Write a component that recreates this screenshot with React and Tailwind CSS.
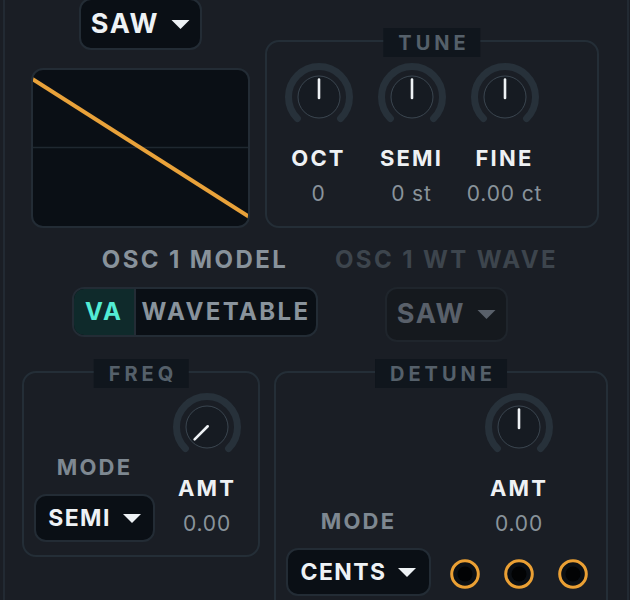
import React from 'react';

const Caret = ({ className }) => (
  <svg viewBox="0 0 20 10" className={className}>
    <path d="M0 0 L20 0 L10 10 Z" fill="currentColor" />
  </svg>
);

const Dropdown = ({ label, className, textClass, caretClass }) => (
  <div className={`flex items-center justify-center gap-[12px] rounded-[12px] border-2 ${className}`}>
    <span className={`font-bold tracking-[0.06em] ${textClass}`}>{label}</span>
    <Caret className={caretClass} />
  </div>
);

// 270 degree dial, pointer angle in degrees clockwise from top
const Knob = ({ angle = 0 }) => (
  <svg width="70" height="70" viewBox="0 0 70 70">
    <path d="M13.43 56.57 A30.5 30.5 0 1 1 56.57 56.57" fill="none" stroke="#27313a" strokeWidth="7" strokeLinecap="round" />
    <circle cx="35" cy="35" r="21" fill="#161b22" stroke="#3b4650" strokeWidth="1" />
    <g transform={`rotate(${angle} 35 35)`}>
      <line x1="35" y1="36" x2="35" y2="17.5" stroke="#eef2f5" strokeWidth="2.6" strokeLinecap="round" />
    </g>
  </svg>
);

const Jack = () => (
  <svg width="30" height="30" viewBox="0 0 30 30">
    <circle cx="15" cy="15" r="13.3" fill="#0b0f14" stroke="#eba034" strokeWidth="3" />
    <circle cx="15" cy="15" r="7.5" fill="#020304" />
  </svg>
);

const Panel = ({ title, className, children }) => (
  <div className={`relative rounded-[14px] border-2 border-[#242e37] ${className}`}>
    <div className="absolute left-1/2 top-[-14px] flex h-[29px] -translate-x-1/2 items-center bg-[#10161d] pl-[15px] pr-[11px] text-[20px] font-bold tracking-[0.2em] text-[#55606a]">
      {title}
    </div>
    {children}
  </div>
);

const KnobColumn = ({ label, value, angle, className }) => (
  <div className={`flex flex-col items-center ${className}`}>
    <Knob angle={angle} />
    <div className="mt-[14px] text-[22px] font-bold leading-[24px] tracking-[0.1em] text-[#eef1f4]">{label}</div>
    <div className="mt-[12px] text-[21px] leading-[24px] tracking-[0.04em] text-[#89939b]">{value}</div>
  </div>
);

export default function App() {
  return (
    <div className="h-[600px] w-[630px] overflow-hidden bg-[#1a1e25] pl-[3px] font-['Inter',sans-serif]">
      <div className="h-full w-[626px] border-x-2 border-[#222a33]">
        {/* oscillator shape + tune */}
        <div className="flex items-start">
          <div className="ml-[26px] flex w-[219px] flex-col items-center">
            <Dropdown
              label="SAW"
              className="-mt-[2px] h-[52px] w-[123px] border-[#232c35] bg-[#0a0f15]"
              textClass="text-[27px] text-[#eef2f5]"
              caretClass="h-[9px] w-[19px] text-[#eef2f5]"
            />
            <div className="mt-[18px] h-[160px] w-[219px] overflow-hidden rounded-[12px] border-2 border-[#232c35] bg-[#0a0f15]">
              <svg width="215" height="156" viewBox="0 0 215 156">
                <line x1="0" y1="77.5" x2="215" y2="77.5" stroke="#1f2830" strokeWidth="1.5" />
                <line x1="-2" y1="8" x2="217" y2="147.5" stroke="#e9a23a" strokeWidth="4" />
              </svg>
            </div>
          </div>

          <Panel title="TUNE" className="ml-[15px] mt-[40px] h-[188px] w-[334px]">
            <div className="flex pl-[5px] pt-[20px]">
              <KnobColumn label="OCT" value="0" className="w-[93px]" />
              <KnobColumn label="SEMI" value="0 st" className="w-[93px]" />
              <KnobColumn label="FINE" value="0.00 ct" className="w-[93px]" />
            </div>
          </Panel>
        </div>

        {/* model selectors */}
        <div className="flex h-[143px] items-start">
          <div className="ml-[67px] flex w-[246px] flex-col items-center">
            <div className="mt-[20px] text-[24px] font-bold leading-[24px] tracking-[0.1em] text-[#88929b]">OSC 1 MODEL</div>
            <div className="mt-[15px] flex h-[50px] w-[246px] overflow-hidden rounded-[12px] border-2 border-[#232c35] bg-[#0a0f15]">
              <div className="flex w-[60px] items-center justify-center bg-[#0f2a2b] text-[24px] font-bold tracking-[0.08em] text-[#53ecd4]">VA</div>
              <div className="w-[2px] bg-[#232c35]" />
              <div className="flex flex-1 items-center justify-center text-[24px] font-bold tracking-[0.1em] text-[#89939c]">WAVETABLE</div>
            </div>
          </div>
          <div className="ml-[12px] flex w-[233px] flex-col items-center">
            <div className="mt-[20px] text-[24px] font-bold leading-[24px] tracking-[0.1em] text-[#3d454d]">OSC 1 WT WAVE</div>
            <Dropdown
              label="SAW"
              className="mt-[15px] h-[55px] w-[123px] border-[#1f252c] bg-[#15191e]"
              textClass="text-[27px] text-[#59606a]"
              caretClass="h-[9px] w-[19px] text-[#59606a]"
            />
          </div>
        </div>

        {/* freq + detune */}
        <div className="flex items-start">
          <Panel title="FREQ" className="ml-[17px] h-[186px] w-[238px]">
            <div className="flex items-start">
              <div className="ml-[10px] flex w-[121px] flex-col items-center">
                <div className="mt-[82px] text-[22px] font-bold leading-[24px] tracking-[0.1em] text-[#7e8891]">MODE</div>
                <Dropdown
                  label="SEMI"
                  className="mt-[15px] h-[48px] w-[121px] border-[#232c35] bg-[#0a0f15]"
                  textClass="text-[23px] text-[#eef2f5]"
                  caretClass="h-[9px] w-[18px] text-[#eef2f5]"
                />
              </div>
              <KnobColumn label="AMT" value="0.00" angle={225} className="ml-[12px] mt-[19px] w-[80px]" />
            </div>
          </Panel>

          <Panel title="DETUNE" className="ml-[14px] h-[260px] w-[334px]">
            <div className="flex items-start">
              <div className="ml-[10px] flex w-[145px] flex-col items-center">
                <div className="mt-[136px] text-[22px] font-bold leading-[24px] tracking-[0.1em] text-[#7e8891]">MODE</div>
                <Dropdown
                  label="CENTS"
                  className="mt-[15px] h-[48px] w-[145px] border-[#232c35] bg-[#0a0f15]"
                  textClass="text-[23px] text-[#eef2f5]"
                  caretClass="h-[9px] w-[18px] text-[#eef2f5]"
                />
              </div>
              <div className="ml-[19px] flex w-[138px] flex-col items-center">
                <KnobColumn label="AMT" value="0.00" className="mt-[19px]" />
                <div className="mt-[23px] flex gap-[24px]">
                  <Jack />
                  <Jack />
                  <Jack />
                </div>
              </div>
            </div>
          </Panel>
        </div>
      </div>
    </div>
  );
}
